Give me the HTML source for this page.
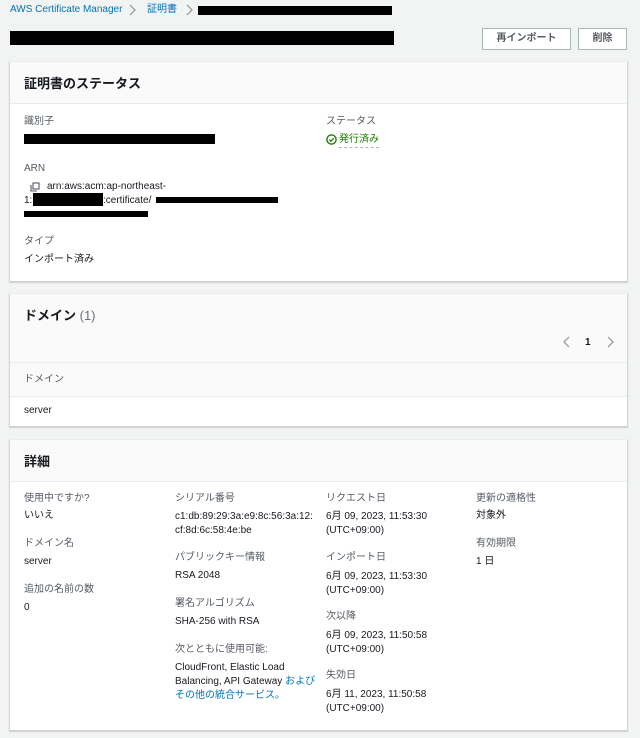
<!DOCTYPE html>
<html><head><meta charset="utf-8"><style>
*{margin:0;padding:0;box-sizing:border-box}
body{width:640px;height:738px;background:#f2f3f3;font-family:"Liberation Sans","Noto Sans CJK JP",sans-serif;font-size:10px;color:#16191f;position:relative;overflow:hidden}
.a{position:absolute;white-space:nowrap;line-height:12px}
.card{position:absolute;left:10px;width:617px;background:#fff;box-shadow:0 1px 1px 1px rgba(0,0,0,.15)}
.hd{position:absolute;left:0;top:0;width:100%;background:#fafafa;border-bottom:1px solid #eaeded}
.h{font-size:13px;font-weight:bold;line-height:16px}
.lb{color:#545b64}
.k{position:absolute;background:#000}
.btn{position:absolute;border:1px solid #aab7b8;background:#fff;font-size:10px;font-weight:bold;color:#545b64;text-align:center;line-height:20px;height:22px}
.blue{color:#0073bb}
svg{position:absolute}
</style></head><body>
<div class="a blue" style="left:10px;top:4px">AWS Certificate Manager</div>
<svg style="left:128px;top:4px" width="8" height="12" viewBox="0 0 8 12"><path d="M2 1l5 5-5 5" fill="none" stroke="#879596" stroke-width="1.2"/></svg>
<div class="a blue" style="left:147px;top:4px">証明書</div>
<svg style="left:185px;top:4px" width="8" height="12" viewBox="0 0 8 12"><path d="M2 1l5 5-5 5" fill="none" stroke="#879596" stroke-width="1.2"/></svg>
<div class="k" style="left:198px;top:6px;width:194px;height:9px"></div>
<div class="k" style="left:10px;top:31px;width:384px;height:14px"></div>
<div class="btn" style="left:482px;top:28px;width:89px">再インポート</div>
<div class="btn" style="left:578px;top:28px;width:49px">削除</div>

<div class="card" style="top:62px;height:219px">
 <div class="hd" style="height:42px"></div>
 <div class="a h" style="left:14px;top:14px">証明書のステータス</div>
 <div class="a lb" style="left:14px;top:54px">識別子</div>
 <div class="k" style="left:14px;top:72px;width:191px;height:10px"></div>
 <div class="a lb" style="left:316px;top:54px">ステータス</div>
 <svg style="left:316px;top:72px" width="11" height="11" viewBox="0 0 11 11"><circle cx="5.5" cy="5.5" r="4.6" fill="none" stroke="#1d8102" stroke-width="1.4"/><path d="M3.3 5.6l1.6 1.6 2.9-3" fill="none" stroke="#1d8102" stroke-width="1.3"/></svg>
 <div class="a" style="left:329px;top:72px;color:#1d8102;border-bottom:1px dashed #aab7b8;padding-bottom:1px">発行済み</div>
 <div class="a lb" style="left:14px;top:101px">ARN</div>
 <svg style="left:20px;top:120px" width="10" height="10" viewBox="0 0 10 10"><rect x="3" y="1" width="6" height="6" fill="none" stroke="#545b64" stroke-width="1.1"/><path d="M1 3v6h6" fill="none" stroke="#545b64" stroke-width="1.1"/></svg>
 <div class="a" style="left:37px;top:119px">arn:aws:acm:ap-northeast-</div>
 <div class="a" style="left:14px;top:133px">1:</div>
 <div class="k" style="left:23px;top:131px;width:70px;height:13px"></div>
 <div class="a" style="left:93px;top:133px">:certificate/</div>
 <div class="k" style="left:146px;top:135px;width:122px;height:6px"></div>
 <div class="k" style="left:14px;top:149px;width:124px;height:6px"></div>
 <div class="a lb" style="left:14px;top:174px">タイプ</div>
 <div class="a" style="left:14px;top:192px">インポート済み</div>
</div>

<div class="card" style="top:294px;height:132px">
 <div class="hd" style="height:103px;border-bottom:1px solid #eaeded"></div>
 <div class="a h" style="left:14px;top:14px">ドメイン <span style="font-weight:normal;color:#687078">(1)</span></div>
 <svg style="left:553px;top:42px" width="8" height="12" viewBox="0 0 8 12"><path d="M6 1L1 6l5 5" fill="none" stroke="#879596" stroke-width="1.2"/></svg>
 <div class="a" style="left:575px;top:43px;font-weight:bold">1</div>
 <svg style="left:596px;top:42px" width="8" height="12" viewBox="0 0 8 12"><path d="M2 1l5 5-5 5" fill="none" stroke="#879596" stroke-width="1.2"/></svg>
 <div class="a" style="left:0;top:68px;width:617px;height:35px;border-top:1px solid #eaeded"></div>
 <div class="a lb" style="left:14px;top:80px">ドメイン</div>
 <div class="a" style="left:14px;top:111px">server</div>
</div>

<div class="card" style="top:440px;height:290px">
 <div class="hd" style="height:42px"></div>
 <div class="a h" style="left:14px;top:14px">詳細</div>
 <div class="a lb" style="left:14px;top:53px">使用中ですか?</div>
 <div class="a" style="left:14px;top:70px">いいえ</div>
 <div class="a lb" style="left:14px;top:98px">ドメイン名</div>
 <div class="a" style="left:14px;top:116px">server</div>
 <div class="a lb" style="left:14px;top:144px">追加の名前の数</div>
 <div class="a" style="left:14px;top:162px">0</div>

 <div class="a lb" style="left:165px;top:53px">シリアル番号</div>
 <div class="a" style="left:165px;top:70px;line-height:14px">c1:db:89:29:3a:e9:8c:56:3a:12:<br>cf:8d:6c:58:4e:be</div>
 <div class="a lb" style="left:165px;top:112px">パブリックキー情報</div>
 <div class="a" style="left:165px;top:130px">RSA 2048</div>
 <div class="a lb" style="left:165px;top:158px">署名アルゴリズム</div>
 <div class="a" style="left:165px;top:176px">SHA-256 with RSA</div>
 <div class="a lb" style="left:165px;top:204px">次とともに使用可能:</div>
 <div class="a" style="left:165px;top:221px;line-height:14px">CloudFront, Elastic Load<br>Balancing, API Gateway <span class="blue">および</span><br><span class="blue">その他の統合サービス。</span></div>

 <div class="a lb" style="left:316px;top:53px">リクエスト日</div>
 <div class="a" style="left:316px;top:70px;line-height:14px">6月 09, 2023, 11:53:30<br>(UTC+09:00)</div>
 <div class="a lb" style="left:316px;top:112px">インポート日</div>
 <div class="a" style="left:316px;top:130px;line-height:14px">6月 09, 2023, 11:53:30<br>(UTC+09:00)</div>
 <div class="a lb" style="left:316px;top:171px">次以降</div>
 <div class="a" style="left:316px;top:189px;line-height:14px">6月 09, 2023, 11:50:58<br>(UTC+09:00)</div>
 <div class="a lb" style="left:316px;top:230px">失効日</div>
 <div class="a" style="left:316px;top:248px;line-height:14px">6月 11, 2023, 11:50:58<br>(UTC+09:00)</div>

 <div class="a lb" style="left:466px;top:53px">更新の適格性</div>
 <div class="a" style="left:466px;top:70px">対象外</div>
 <div class="a lb" style="left:466px;top:98px">有効期限</div>
 <div class="a" style="left:466px;top:116px">1 日</div>
</div>
</body></html>
